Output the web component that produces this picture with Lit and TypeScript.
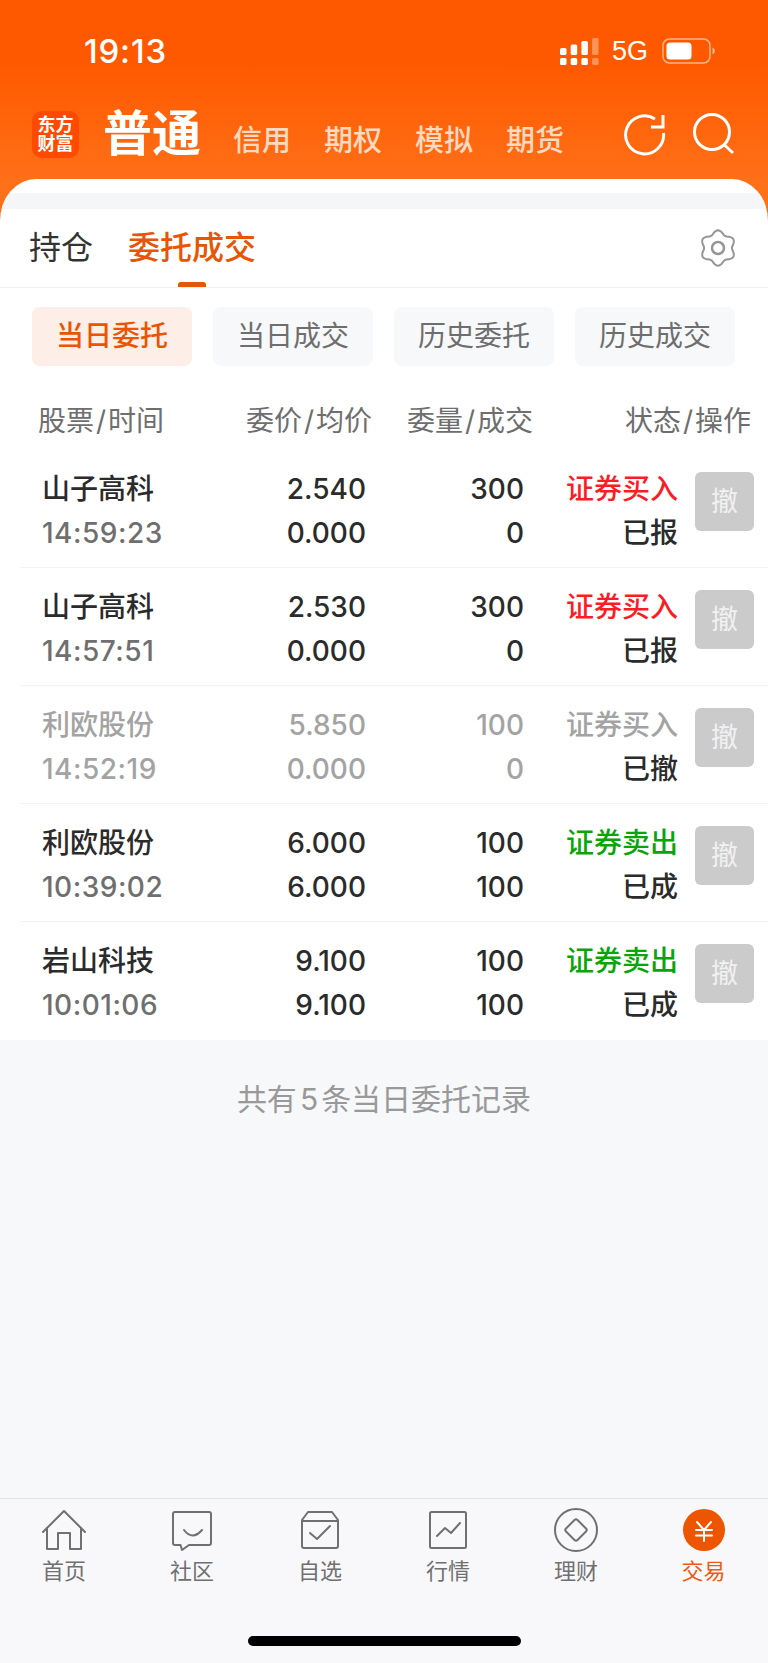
import { LitElement, html, css, svg } from "lit";
import { customElement } from "lit/decorators.js";

interface OrderRow {
  name: string;
  time: string;
  price: string;
  avg: string;
  qty: string;
  done: string;
  side: string;
  status: string;
  tone: "buy" | "sell" | "off";
}

const ROWS: OrderRow[] = [
  { name: "山子高科", time: "14:59:23", price: "2.540", avg: "0.000", qty: "300", done: "0", side: "证券买入", status: "已报", tone: "buy" },
  { name: "山子高科", time: "14:57:51", price: "2.530", avg: "0.000", qty: "300", done: "0", side: "证券买入", status: "已报", tone: "buy" },
  { name: "利欧股份", time: "14:52:19", price: "5.850", avg: "0.000", qty: "100", done: "0", side: "证券买入", status: "已撤", tone: "off" },
  { name: "利欧股份", time: "10:39:02", price: "6.000", avg: "6.000", qty: "100", done: "100", side: "证券卖出", status: "已成", tone: "sell" },
  { name: "岩山科技", time: "10:01:06", price: "9.100", avg: "9.100", qty: "100", done: "100", side: "证券卖出", status: "已成", tone: "sell" },
];

const NAV = [
  {
    label: "首页",
    icon: svg`<path d="M3 26 L24 5 L45 26" /><path d="M7 22 V43 H18 V27 H30 V43 H41 V22" />`,
  },
  {
    label: "社区",
    icon: svg`<path d="M7 6 H41 Q43 6 43 8 V37 Q43 39 41 39 H21 L14 44 L12.5 39 H7 Q5 39 5 37 V8 Q5 6 7 6 Z" /><path d="M16 24 Q24.500 35 34 24" />`,
  },
  {
    label: "自选",
    icon: svg`<path d="M12 6 H36 L42 14 V40 Q42 42 40 42 H8 Q6 42 6 40 V14 Z" /><path d="M6 15 H42" /><path d="M14 27 L21 33 L34 20" />`,
  },
  {
    label: "行情",
    icon: svg`<rect x="6" y="6" width="36" height="36" rx="1.5" /><path d="M13 30 L21 22 L27 27 L36 17" />`,
  },
  {
    label: "理财",
    icon: svg`<circle cx="24" cy="24" r="21" /><path d="M22.5 14 Q24 12.500 25.500 14 L34 22.500 Q35.500 24 34 25.500 L25.500 34 Q24 35.500 22.500 34 L14 25.500 Q12.500 24 14 22.500 Z" />`,
  },
];

// six soft lobes, one pointing straight up
function gearPath(): string {
  const pts: string[] = [];
  for (let i = 0; i < 96; i++) {
    const a = (i / 96) * Math.PI * 2 - Math.PI / 2;
    const r = 15.8 + 1.9 * Math.cos(6 * (a + Math.PI / 2));
    pts.push(`${(19 + r * Math.cos(a)).toFixed(2)} ${(19 + r * Math.sin(a)).toFixed(2)}`);
  }
  return `M${pts.join(" L")} Z`;
}

@customElement("app-root")
export class AppRoot extends LitElement {
  static styles = css`
    :host {
      display: flex;
      flex-direction: column;
      width: 768px;
      height: 1663px;
      overflow: hidden;
      background: #f7f8fa;
      font-family: Inter, "Noto Sans CJK SC", sans-serif;
      color: #2b2b2b;
    }

    .top {
      height: 222px;
      background: linear-gradient(180deg, #ff5900 0%, #ff5900 28%, #ff7119 85%, #ff7119 100%);
      color: #fff;
    }
    .status {
      display: flex;
      align-items: center;
      height: 102px;
      padding: 0 52px 0 84px;
    }
    .clock {
      font-size: 33px;
      font-weight: 500;
      letter-spacing: 0.8px;
    }
    .signal {
      margin-left: auto;
    }
    .net {
      margin: 0 14px 0 13px;
      font-size: 27px;
      font-family: "Liberation Sans", sans-serif;
    }
    .battery {
      display: block;
    }

    .brand {
      display: flex;
      align-items: center;
      height: 64px;
      padding: 0 32px;
    }
    .logo {
      display: flex;
      flex-direction: column;
      align-items: center;
      justify-content: center;
      width: 47px;
      height: 47px;
      border-radius: 10px;
      background: #ff4a00;
      font-size: 18px;
      line-height: 19px;
      font-weight: 700;
    }
    .title {
      margin: 0 32px 0 24px;
      font-size: 49px;
      line-height: 64px;
      font-weight: 700;
    }
    .subs {
      display: flex;
      gap: 33px;
      padding-top: 14px;
    }
    .subs span {
      font-size: 29px;
      line-height: 40px;
      font-weight: 500;
      color: #ffd9c2;
    }
    .tools {
      display: flex;
      gap: 26px;
      margin-left: auto;
    }
    .tools svg {
      display: block;
    }

    .main {
      flex: 1;
      margin-top: -43px;
      position: relative;
    }
    .card {
      border-radius: 36px 36px 0 0 / 42px 42px 0 0;
      overflow: hidden;
      background: #fff;
      padding-top: 14px;
    }
    .band {
      height: 16px;
      background: #f5f6f8;
    }
    .tabs {
      display: flex;
      align-items: center;
      gap: 35px;
      height: 78px;
      padding: 0 29px;
      border-bottom: 1px solid #f0f0f2;
      font-size: 32px;
    }
    .tab {
      position: relative;
      line-height: 78px;
      color: #333;
    }
    .tab.on {
      color: #e85504;
      font-weight: 500;
    }
    .tab.on::after {
      content: "";
      position: absolute;
      left: 50px;
      bottom: 0;
      width: 28px;
      height: 5px;
      border-radius: 3px 3px 0 0;
      background: #e85504;
    }
    .gear {
      display: block;
      margin-left: auto;
      margin-right: 2px;
    }

    .pills {
      display: flex;
      gap: 21px;
      padding: 19px 32px 0;
    }
    .pill {
      width: 160px;
      height: 59px;
      border-radius: 8px;
      background: #f7f8fa;
      color: #6e6e6e;
      font-size: 28px;
      line-height: 59px;
      text-align: center;
    }
    .pill.on {
      background: #fdeee8;
      color: #ea5504;
      font-weight: 500;
    }

    .head {
      display: grid;
      grid-template-columns: 172px 162px 161px 218px;
      padding: 35px 0 8.500px 38px;
      font-size: 28px;
      line-height: 40px;
      color: #6e6e6e;
    }
    .head span + span {
      text-align: right;
    }
    .head i {
      margin: 0 2px;
      font-style: normal;
    }

    .row {
      display: grid;
      grid-template-columns: 178px 146px 158px 154px 76px;
      height: 118px;
      box-sizing: border-box;
      margin-left: 20px;
      padding: 17.500px 0 0 22px;
      border-bottom: 1px solid #f2f3f5;
      font-size: 28px;
      line-height: 44px;
      font-weight: 500;
    }
    .row:last-child {
      border-bottom: 0;
    }
    .cell {
      text-align: right;
    }
    .cell.first {
      text-align: left;
    }
    .time {
      color: #6f6f6f;
      font-size: 28px;
      letter-spacing: 0.500px;
    }
    .buy {
      color: #fb1c25;
    }
    .sell {
      color: #0aa50a;
    }
    .off,
    .off .time {
      color: #a3a3a3;
    }
    .row .dark {
      color: #2b2b2b;
    }
    .undo {
      width: 59px;
      height: 59px;
      margin-left: 17px;
      margin-top: 5px;
      border-radius: 6px;
      background: #cbcbcb;
      color: #f1f1f1;
      font-size: 27px;
      font-weight: 400;
      line-height: 59px;
      text-align: center;
    }

    .total {
      padding-top: 39px;
      font-size: 30px;
      line-height: 40px;
      text-align: center;
      color: #999;
    }
    .total b {
      margin: 0 3px;
      font-weight: 400;
    }

    .nav {
      background: #f8f8fb;
      border-top: 1px solid #e2e2e4;
      height: 165px;
      box-sizing: border-box;
      padding-top: 7px;
    }
    .items {
      display: grid;
      grid-template-columns: repeat(6, 128px);
    }
    .item {
      display: flex;
      flex-direction: column;
      align-items: center;
      gap: 2px;
      font-size: 22px;
      line-height: 30px;
      color: #707070;
    }
    .item svg {
      display: block;
      fill: none;
      stroke: #707070;
      stroke-width: 2;
      stroke-linejoin: round;
      stroke-linecap: round;
    }
    .item.on {
      color: #ee5a10;
      margin-left: -1px;
    }
    .item.on svg {
      stroke: #fff;
    }
    .bar {
      width: 273px;
      height: 10px;
      margin: 50px auto 0;
      border-radius: 5px;
      background: #000;
    }
  `;

  renderSignal() {
    const tops = [
      { y: 10, h: 7 },
      { y: 6.5, h: 10.5 },
      { y: 3, h: 14 },
      { y: 0, h: 17 },
    ];
    return html`<svg class="signal" width="39" height="27" viewBox="0 0 39 27">
      ${tops.map(
        (t, i) => svg`
          <rect x=${i * 10.7} y=${t.y} width="6.500" height=${t.h} rx="1.500" fill="#fff" opacity=${i === 3 ? 0.35 : 1} />
          <rect x=${i * 10.7} y="20" width="6.500" height="7" rx="1.500" fill="#fff" opacity=${i === 3 ? 0.35 : 1} />`,
      )}
    </svg>`;
  }

  renderRow(r: OrderRow) {
    return html`<div class="row ${r.tone === "off" ? "off" : ""}">
      <div class="cell first">
        <div>${r.name}</div>
        <div class="time">${r.time}</div>
      </div>
      <div class="cell">
        <div>${r.price}</div>
        <div>${r.avg}</div>
      </div>
      <div class="cell">
        <div>${r.qty}</div>
        <div>${r.done}</div>
      </div>
      <div class="cell">
        <div class=${r.tone}>${r.side}</div>
        <div class="dark">${r.status}</div>
      </div>
      <div class="undo">撤</div>
    </div>`;
  }

  render() {
    return html`
      <div class="top">
        <div class="status">
          <span class="clock">19:13</span>
          ${this.renderSignal()}
          <span class="net">5G</span>
          <svg class="battery" width="54" height="26" viewBox="0 0 54 26">
            <rect x="1" y="1" width="47" height="24" rx="6.500" fill="none" stroke="#ffb48a" stroke-width="1.500" />
            <rect x="4.500" y="4.500" width="25" height="17" rx="3.500" fill="#fff" />
            <path d="M50.500 9.500 Q53 10.500 53 13 Q53 15.500 50.500 16.500 Z" fill="#ffb48a" />
          </svg>
        </div>
        <div class="brand">
          <div class="logo"><span>东方</span><span>财富</span></div>
          <div class="title">普通</div>
          <div class="subs">
            <span>信用</span><span>期权</span><span>模拟</span><span>期货</span>
          </div>
          <div class="tools">
            <svg width="44" height="44" viewBox="0 0 44 44" fill="none" stroke="#fff" stroke-width="3">
              <path d="M33 7 A19 19 0 1 0 41.500 21" />
              <path d="M29 15 H41 V3" />
            </svg>
            <svg width="44" height="44" viewBox="0 0 44 44" fill="none" stroke="#fff" stroke-width="3">
              <circle cx="20" cy="20" r="17.500" />
              <path d="M32.500 33 L41 41" />
            </svg>
          </div>
        </div>
      </div>
      <div class="main">
        <div class="card">
          <div class="band"></div>
          <div class="tabs">
            <span class="tab">持仓</span>
            <span class="tab on">委托成交</span>
            <svg class="gear" width="38" height="38" viewBox="0 0 38 38" fill="none" stroke="#969696" stroke-width="2">
              <path d=${gearPath()} />
              <circle cx="19" cy="19" r="6" stroke-width="2.500" />
            </svg>
          </div>
          <div class="pills">
            <div class="pill on">当日委托</div>
            <div class="pill">当日成交</div>
            <div class="pill">历史委托</div>
            <div class="pill">历史成交</div>
          </div>
          <div class="head">
            <span>股票<i>/</i>时间</span><span>委价<i>/</i>均价</span><span>委量<i>/</i>成交</span><span>状态<i>/</i>操作</span>
          </div>
          ${ROWS.map((r) => this.renderRow(r))}
        </div>
        <div class="total">共有<b>5</b>条当日委托记录</div>
      </div>
      <div class="nav">
        <div class="items">
          ${NAV.map(
            (n) => html`<div class="item">
              <svg width="48" height="48" viewBox="0 0 48 48">${n.icon}</svg>
              <span>${n.label}</span>
            </div>`,
          )}
          <div class="item on">
            <svg width="48" height="48" viewBox="0 0 48 48">
              <circle cx="24" cy="24" r="21" fill="#ee5500" stroke="none" />
              <path d="M17 16 L24 24 L31 16 M16 24 H32 M16 29.500 H32 M24 24 V35" />
            </svg>
            <span>交易</span>
          </div>
        </div>
        <div class="bar"></div>
      </div>
    `;
  }
}
